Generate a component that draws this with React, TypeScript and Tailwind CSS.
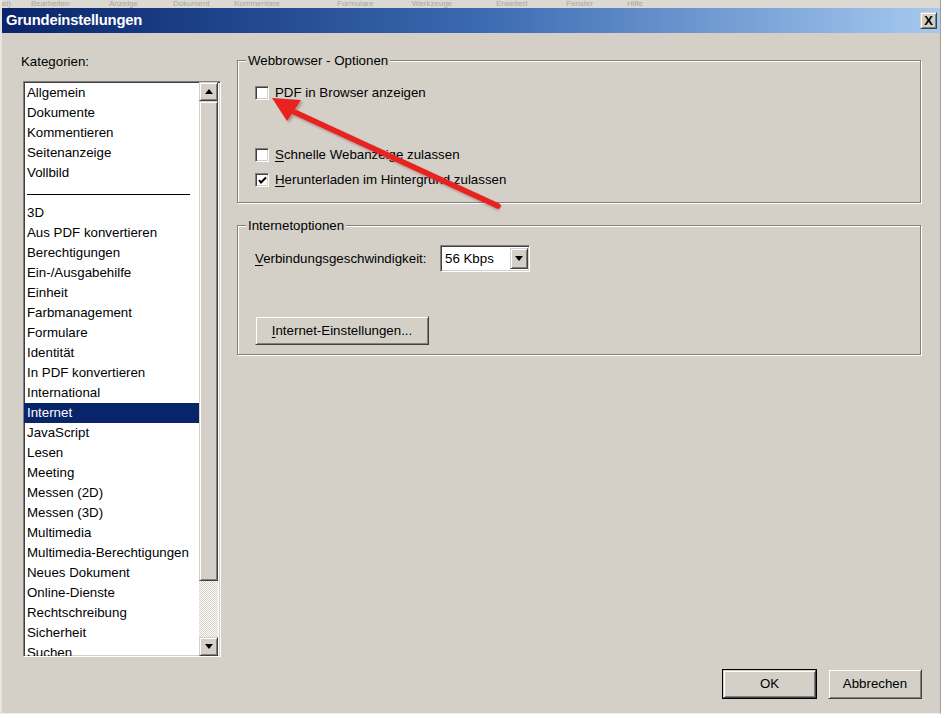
import React from "react";

const raised =
  "border border-t-[#d4d0c8] border-l-[#d4d0c8] border-r-[#404040] border-b-[#404040] shadow-[inset_1px_1px_0_#ffffff,inset_-1px_-1px_0_#808080]";
const sunken =
  "border border-t-[#808080] border-l-[#808080] border-r-white border-b-white shadow-[inset_1px_1px_0_#404040,inset_-1px_-1px_0_#d4d0c8]";
const etched =
  "border border-[#808080] shadow-[inset_1px_1px_0_#ffffff,1px_1px_0_#ffffff]";

const itemsTop = ["Allgemein", "Dokumente", "Kommentieren", "Seitenanzeige", "Vollbild"];
const itemsBottom = [
  "3D",
  "Aus PDF konvertieren",
  "Berechtigungen",
  "Ein-/Ausgabehilfe",
  "Einheit",
  "Farbmanagement",
  "Formulare",
  "Identität",
  "In PDF konvertieren",
  "International",
  "Internet",
  "JavaScript",
  "Lesen",
  "Meeting",
  "Messen (2D)",
  "Messen (3D)",
  "Multimedia",
  "Multimedia-Berechtigungen",
  "Neues Dokument",
  "Online-Dienste",
  "Rechtschreibung",
  "Sicherheit",
  "Suchen",
];

function Row({ label }: { label: string }) {
  const sel = label === "Internet";
  return (
    <div
      className={
        "h-[20px] shrink-0 leading-[20px] pl-[3px] whitespace-nowrap " +
        (sel ? "bg-[#0a246a] text-white" : "text-black")
      }
    >
      {label}
    </div>
  );
}

function Checkbox({ checked }: { checked?: boolean }) {
  return (
    <div className={"w-[14px] h-[14px] bg-white shrink-0 flex items-center justify-center " + sunken}>
      {checked && (
        <svg width="9" height="9" viewBox="0 0 9 9">
          <path d="M1 4 L3 6.5 L8 1.5" stroke="#000" strokeWidth="2" fill="none" />
        </svg>
      )}
    </div>
  );
}

function Tri({ up }: { up?: boolean }) {
  return (
    <svg width="8" height="5" viewBox="0 0 8 5">
      {up ? <path d="M0 5 L4 0 L8 5 Z" fill="#000" /> : <path d="M0 0 L8 0 L4 5 Z" fill="#000" />}
    </svg>
  );
}

export default function App() {
  const font = { fontFamily: '"Liberation Sans", Arial, sans-serif' };
  return (
    <div className="w-[946px] h-[718px] bg-white relative overflow-hidden" style={font}>
      <div className="w-[941px] h-[714px] bg-[#d4d0c8] flex flex-col border-l-2 border-l-[#e6e4df] border-r border-r-[#a09d96] border-b border-b-[#f0efec]">
        {/* menu strip remnant */}
        <div className="h-[8px] overflow-hidden shrink-0 bg-[#dcd9d2]">
          <div className="flex text-[8px] text-[#a9a69f] leading-[8px] whitespace-nowrap">
            <span className="w-[29px]">ei)</span>
            <span className="w-[78px]">Bearbeiten</span>
            <span className="w-[64px]">Anzeige</span>
            <span className="w-[61px]">Dokument</span>
            <span className="w-[103px]">Kommentare</span>
            <span className="w-[75px]">Formulare</span>
            <span className="w-[84px]">Werkzeuge</span>
            <span className="w-[70px]">Erweitert</span>
            <span className="w-[61px]">Fenster</span>
            <span>Hilfe</span>
          </div>
        </div>
        {/* title bar */}
        <div className="h-[25px] shrink-0 bg-linear-to-r from-[#0a246a] via-[#3a68b0] to-[#a6caf0] flex items-center pl-[4px] pr-[3px]">
          <span className="text-white font-bold text-[14.8px] tracking-[-0.2px]">Grundeinstellungen</span>
          <div className="flex-1" />
          <div className={"w-[17px] h-[17px] bg-[#d4d0c8] flex items-center justify-center " + raised}>
            <span className="text-[13px] font-bold leading-none text-black">X</span>
          </div>
        </div>
        {/* body */}
        <div className="flex-1 flex text-[13.3px] text-black">
          {/* left column */}
          <div className="w-[235px] shrink-0 pl-[19px] pt-[20px] flex flex-col">
            <div className="h-[16px] leading-[16px] mt-px">
              Kate<span className="underline underline-offset-2">g</span>orien:
            </div>
            <div className={"mt-[11px] ml-[2px] w-[198px] h-[576px] bg-white flex " + sunken}>
              <div className="w-[175px] h-full overflow-hidden flex flex-col pt-px">
                {itemsTop.map((t) => (
                  <Row key={t} label={t} />
                ))}
                <div className="h-[20px] shrink-0 flex items-center pl-[3px]">
                  <div className="w-[163px] h-px bg-black mt-[2px]" />
                </div>
                {itemsBottom.map((t) => (
                  <Row key={t} label={t} />
                ))}
              </div>
              <div className="w-[19px] h-full flex flex-col">
                <div className={"h-[19px] shrink-0 bg-[#d4d0c8] flex items-center justify-center " + raised}>
                  <Tri up />
                </div>
                <div className={"h-[480px] shrink-0 bg-[#d4d0c8] " + raised} />
                <div className="flex-1 bg-[repeating-conic-gradient(#ffffff_0_25%,#d4d0c8_0_50%)] bg-size-[2px_2px]" />
                <div className={"h-[19px] shrink-0 bg-[#d4d0c8] flex items-center justify-center " + raised}>
                  <Tri />
                </div>
              </div>
            </div>
          </div>
          {/* right column */}
          <div className="w-[684px] shrink-0 pt-[27px] pb-[14px] flex flex-col">
            <div className={"relative h-[143px] shrink-0 " + etched}>
              <span className="absolute left-[8px] -top-[8px] bg-[#d4d0c8] px-[2px] leading-[16px]">
                Webbrowser - Optionen
              </span>
              <div className="flex flex-col pl-[17px] pt-[25px]">
                <div className="flex items-center gap-[6px] h-[14px]">
                  <Checkbox />
                  <span className="leading-[16px]">PDF in Browser anzeigen</span>
                </div>
                <div className="flex items-center gap-[6px] h-[14px] mt-[48px]">
                  <Checkbox />
                  <span className="leading-[16px]">
                    <span className="underline underline-offset-2">S</span>chnelle Webanzeige zulassen
                  </span>
                </div>
                <div className="flex items-center gap-[6px] h-[14px] mt-[11px]">
                  <Checkbox checked />
                  <span className="leading-[16px]">
                    <span className="underline underline-offset-2">H</span>erunterladen im Hintergrund zulassen
                  </span>
                </div>
              </div>
            </div>
            <div className={"relative h-[130px] shrink-0 mt-[22px] " + etched}>
              <span className="absolute left-[8px] -top-[8px] bg-[#d4d0c8] px-[2px] leading-[16px]">
                Internetoptionen
              </span>
              <div className="flex flex-col pl-[17px] pt-[19px]">
                <div className="flex items-center h-[27px]">
                  <span className="w-[185px]">
                    <span className="underline underline-offset-2">V</span>erbindungsgeschwindigkeit:
                  </span>
                  <div className={"w-[90px] h-[27px] bg-white flex items-center " + sunken}>
                    <span className="flex-1 pl-[4px] leading-[16px]">56 Kbps</span>
                    <div className={"w-[18px] h-[21px] mr-[1px] bg-[#d4d0c8] flex items-center justify-center " + raised}>
                      <Tri />
                    </div>
                  </div>
                </div>
                <div
                  className={
                    "mt-[44px] w-[174px] h-[29px] bg-[#d4d0c8] flex items-center justify-center " + raised
                  }
                >
                  <span>
                    <span className="underline underline-offset-2">I</span>nternet-Einstellungen...
                  </span>
                </div>
              </div>
            </div>
            <div className="flex-1" />
            <div className="flex justify-end gap-[11px] -mr-[1px]">
              <div className="w-[95px] h-[30px] border border-black">
                <div className={"w-full h-full bg-[#d4d0c8] flex items-center justify-center " + raised}>
                  OK
                </div>
              </div>
              <div className={"w-[94px] h-[30px] bg-[#d4d0c8] flex items-center justify-center " + raised}>
                Abbrechen
              </div>
            </div>
          </div>
        </div>
      </div>
      {/* red arrow annotation */}
      <svg className="absolute left-0 top-0 pointer-events-none" width="946" height="718">
        <defs>
          <filter id="sh" x="-10%" y="-10%" width="120%" height="120%">
            <feGaussianBlur stdDeviation="1.2" />
          </filter>
        </defs>
        <g opacity="0.35" filter="url(#sh)" transform="translate(2,2)">
          <line x1="498" y1="206" x2="292" y2="111" stroke="#7a2020" strokeWidth="6" />
          <path d="M273 98 L301 100 L287 121 Z" fill="#7a2020" />
        </g>
        <line x1="498" y1="206" x2="290" y2="110" stroke="#e8231f" strokeWidth="5.5" strokeLinecap="round" />
        <path d="M272 98 L301 100 L287 121 Z" fill="#e8231f" />
      </svg>
    </div>
  );
}
